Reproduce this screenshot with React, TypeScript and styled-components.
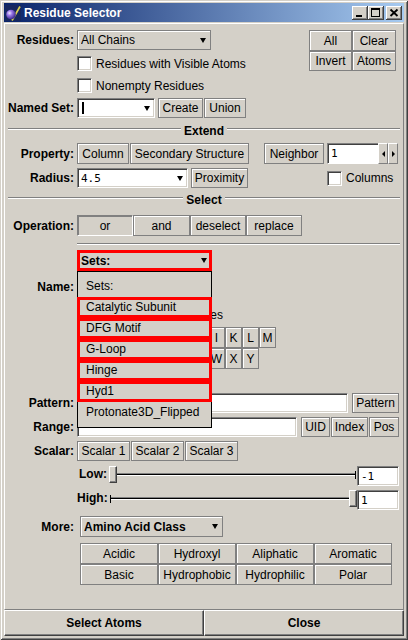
import React from "react";
import styled, { createGlobalStyle, css } from "styled-components";

const FACE = "#D4D0C8";
const SHADOW = "#808080";
const DARK = "#404040";

const GlobalStyle = createGlobalStyle`
  * { box-sizing: border-box; }
  html, body { margin: 0; padding: 0; background: ${FACE}; }
  body {
    font-family: "Liberation Sans", Arial, sans-serif;
    font-size: 12px;
    color: #000;
  }
`;

const Window = styled.div`
  width: 408px;
  height: 640px;
  display: flex;
  flex-direction: column;
  padding: 3px 4px 4px;
  background: ${FACE};
  box-shadow: inset 1px 1px 0 ${FACE}, inset -1px -1px 0 ${DARK},
    inset 2px 2px 0 #fff, inset -2px -2px 0 ${SHADOW};
`;

const TitleBar = styled.div`
  height: 19px;
  flex-shrink: 0;
  margin-bottom: 1px;
  display: flex;
  align-items: center;
  padding: 0 2px 0 1px;
  background: linear-gradient(to right, #0a246a, #a6caf0);
`;

const TitleText = styled.span`
  flex: 1;
  margin-left: 3px;
  color: #fff;
  font-weight: bold;
  font-size: 12px;
  white-space: nowrap;
`;

const CaptionButton = styled.div<{ $gap?: number }>`
  width: 16px;
  height: 14px;
  margin-left: ${(p) => p.$gap ?? 0}px;
  background: ${FACE};
  box-shadow: inset -1px -1px 0 ${DARK}, inset 1px 1px 0 #fff,
    inset -2px -2px 0 ${SHADOW};
  svg {
    display: block;
  }
`;

const Panel = styled.div`
  flex: 1;
  display: flex;
  flex-direction: column;
  padding: 6px 3px 0 0;
  border-top: 1px solid #fff;
  border-left: 1px solid #fff;
  border-bottom: 1px solid ${SHADOW};
  border-right: 1px solid ${SHADOW};
`;

const TopSection = styled.div`
  display: flex;
  align-items: flex-start;
`;

const LeftCol = styled.div`
  flex: 1;
  display: flex;
  flex-direction: column;
`;

const CornerGrid = styled.div`
  display: grid;
  grid-template-columns: 43px 44px;
  grid-template-rows: 21px 20px;
  margin-right: 4px;
`;

const Row = styled.div<{ $h?: number; $mt?: number; $indent?: boolean; $align?: string; $raised?: boolean }>`
  position: relative;
  z-index: ${(p) => (p.$raised ? 5 : "auto")};
  display: flex;
  align-items: ${(p) => p.$align ?? "center"};
  height: ${(p) => p.$h ?? 20}px;
  margin-top: ${(p) => p.$mt ?? 0}px;
  padding-left: ${(p) => (p.$indent ? 72 : 0)}px;
  flex-shrink: 0;
`;

const Label = styled.div`
  width: 69px;
  margin-right: 3px;
  flex-shrink: 0;
  text-align: right;
  font-weight: bold;
  white-space: nowrap;
`;

const Button = styled.button<{ $w?: number; $ml?: number; $mr?: number; $pressed?: boolean }>`
  appearance: none;
  margin: 0 ${(p) => p.$mr ?? 0}px 0 ${(p) => p.$ml ?? 0}px;
  padding: 0;
  font: inherit;
  color: #000;
  width: ${(p) => (p.$w ? `${p.$w}px` : "auto")};
  height: 100%;
  flex-shrink: 0;
  display: flex;
  align-items: center;
  justify-content: center;
  white-space: nowrap;
  background: ${FACE};
  border: 1px solid ${SHADOW};
  box-shadow: inset 1px 1px 0 #fff;
  ${(p) =>
    p.$pressed &&
    css`
      border-color: ${SHADOW} #fff #fff ${SHADOW};
      box-shadow: inset 1px 1px 0 ${SHADOW};
    `}
`;

const BigButton = styled.button`
  appearance: none;
  margin: 0;
  padding: 0;
  flex: 1;
  height: 100%;
  font: inherit;
  font-weight: bold;
  color: #000;
  background: ${FACE};
  border-top: 1px solid #fff;
  border-left: 1px solid #fff;
  border-bottom: 1px solid ${DARK};
  border-right: 1px solid ${DARK};
  box-shadow: inset -1px -1px 0 ${SHADOW};
`;

const BottomBar = styled.div`
  height: 26px;
  flex-shrink: 0;
  display: flex;
`;

const CheckBox = styled.span`
  width: 15px;
  height: 15px;
  flex-shrink: 0;
  background: #fff;
  border-top: 1px solid ${SHADOW};
  border-left: 1px solid ${SHADOW};
  border-bottom: 1px solid #fff;
  border-right: 1px solid #fff;
  box-shadow: inset 1px 1px 0 ${DARK}, inset -1px -1px 0 ${FACE};
`;

const CheckText = styled.span`
  margin-left: 4px;
  white-space: nowrap;
`;

const Field = styled.div<{ $w?: number; $ml?: number; $flex?: boolean }>`
  width: ${(p) => (p.$w ? `${p.$w}px` : "auto")};
  flex: ${(p) => (p.$flex ? 1 : "none")};
  margin-left: ${(p) => p.$ml ?? 0}px;
  height: 100%;
  display: flex;
  align-items: center;
  padding-left: 3px;
  background: #fff;
  font-family: "DejaVu Sans Mono", "Liberation Mono", monospace;
  font-size: 11px;
  border-top: 1px solid ${SHADOW};
  border-left: 1px solid ${SHADOW};
  border-bottom: 1px solid #fff;
  border-right: 1px solid #fff;
  box-shadow: inset 1px 1px 0 ${DARK}, inset -1px -1px 0 ${FACE};
`;

const Combo = styled.div<{ $w: number; $ml?: number; $editable?: boolean; $bold?: boolean; $hl?: boolean }>`
  position: relative;
  width: ${(p) => p.$w}px;
  margin-left: ${(p) => p.$ml ?? 0}px;
  height: 100%;
  flex-shrink: 0;
  display: flex;
  align-items: center;
  padding: 0 4px 0 3px;
  font-weight: ${(p) => (p.$bold ? "bold" : "normal")};
  white-space: nowrap;
  ${(p) =>
    p.$editable
      ? css`
          background: #fff;
          border-top: 1px solid ${SHADOW};
          border-left: 1px solid ${SHADOW};
          border-bottom: 1px solid #fff;
          border-right: 1px solid #fff;
          box-shadow: inset 1px 1px 0 ${DARK}, inset -1px -1px 0 ${FACE};
          font-family: "DejaVu Sans Mono", "Liberation Mono", monospace;
          font-size: 11px;
        `
      : css`
          background: ${FACE};
          border: 1px solid ${SHADOW};
          box-shadow: inset 1px 1px 0 #fff;
        `}
  ${(p) =>
    p.$hl &&
    css`
      outline: 3px solid #f00;
      outline-offset: -3px;
    `}
`;

const ComboText = styled.span`
  flex: 1;
  display: flex;
  align-items: center;
  overflow: hidden;
`;

const Arrow = styled.span`
  width: 0;
  height: 0;
  flex-shrink: 0;
  border-left: 3px solid transparent;
  border-right: 3px solid transparent;
  border-top: 5px solid #000;
`;

const Caret = styled.span`
  width: 2px;
  height: 12px;
  background: #000;
  margin-left: 1px;
`;

const TitledSep = styled.div<{ $mt: number }>`
  display: flex;
  align-items: flex-start;
  height: 14px;
  margin: ${(p) => p.$mt}px 0 0 3px;
  flex-shrink: 0;
`;

const SepLine = styled.div`
  flex: 1;
  height: 2px;
  margin-top: 4px;
  border-top: 1px solid ${SHADOW};
  border-bottom: 1px solid #fff;
`;

const SepTitle = styled.div`
  padding: 0 3px;
  line-height: 14px;
  font-weight: bold;
`;

const ContentRule = styled.div<{ $mt: number }>`
  height: 2px;
  margin: ${(p) => p.$mt}px 0 0 72px;
  border-top: 1px solid ${SHADOW};
  border-bottom: 1px solid #fff;
  flex-shrink: 0;
`;

const Spinner = styled.div`
  display: flex;
  height: 100%;
  margin-left: 3px;
`;

const SpinField = styled(Field)`
  box-shadow: inset 1px 1px 0 ${DARK};
  border-right: none;
`;

const SpinButton = styled.div`
  width: 10px;
  height: 100%;
  display: flex;
  align-items: center;
  justify-content: center;
  background: ${FACE};
  border-top: 1px solid #fff;
  border-left: 1px solid #fff;
  border-bottom: 1px solid ${SHADOW};
  border-right: 1px solid ${SHADOW};
`;

const TinyArrow = styled.span<{ $dir: "left" | "right" }>`
  width: 0;
  height: 0;
  border-top: 3px solid transparent;
  border-bottom: 3px solid transparent;
  ${(p) =>
    p.$dir === "left"
      ? css`
          border-right: 3px solid #000;
        `
      : css`
          border-left: 3px solid #000;
        `}
`;

const CheckGroup = styled.div<{ $ml: number }>`
  display: flex;
  align-items: center;
  margin-left: ${(p) => p.$ml}px;
`;

const SetsWrap = styled.div`
  position: relative;
  height: 100%;
  display: flex;
`;

const Popup = styled.div`
  position: absolute;
  top: 100%;
  left: 0;
  width: 135px;
  z-index: 10;
  padding: 4px 0;
  background: ${FACE};
  border: 1px solid #000;
`;

const PopupItem = styled.div<{ $hl?: boolean }>`
  position: relative;
  height: 21px;
  line-height: 21px;
  padding-left: 8px;
  white-space: nowrap;
  ${(p) =>
    p.$hl &&
    css`
      &::after {
        content: "";
        position: absolute;
        top: 0;
        bottom: 0;
        left: -1px;
        right: -1px;
        border: 3px solid #f00;
      }
    `}
`;

const LetterStrip = styled.div<{ $ml: number }>`
  display: flex;
  height: 100%;
  margin-left: ${(p) => p.$ml}px;
`;

const SliderLabel = styled.div`
  width: 30px;
  flex-shrink: 0;
  text-align: right;
  font-weight: bold;
  line-height: 17px;
`;

const Slider = styled.div<{ $pl: number; $pr: number }>`
  width: 250px;
  height: 17px;
  flex-shrink: 0;
  display: flex;
  align-items: center;
  padding: 0 ${(p) => p.$pr}px 0 ${(p) => p.$pl}px;
`;

const Thumb = styled.div`
  width: 8px;
  height: 17px;
  flex-shrink: 0;
  background: ${FACE};
  border-top: 1px solid #fff;
  border-left: 1px solid #fff;
  border-bottom: 1px solid ${DARK};
  border-right: 1px solid ${DARK};
  box-shadow: inset -1px -1px 0 ${SHADOW};
`;

const Track = styled.div`
  flex: 1;
  height: 3px;
  background: #000;
  border-top: 1px solid ${SHADOW};
  border-bottom: 1px solid #fff;
`;

const Tick = styled.div`
  width: 1px;
  height: 8px;
  flex-shrink: 0;
  background: #000;
`;

const ClassGrid = styled.div`
  display: grid;
  grid-template-columns: repeat(4, 78px);
  grid-template-rows: 21px 21px;
  margin: 6px 0 0 75px;
  flex-shrink: 0;
`;

const AppIcon = () => (
  <svg width="16" height="16" viewBox="0 0 16 16" style={{ flexShrink: 0 }}>
    <defs>
      <radialGradient id="ball" cx="0.35" cy="0.35" r="0.75">
        <stop offset="0" stopColor="#f0e8ff" />
        <stop offset="0.35" stopColor="#9a78e8" />
        <stop offset="1" stopColor="#2a1a78" />
      </radialGradient>
    </defs>
    <rect width="16" height="16" fill="#17275e" />
    <line x1="7" y1="15.5" x2="15" y2="1.5" stroke="#d8d050" strokeWidth="1.7" />
    <circle cx="6" cy="9.5" r="4.8" fill="url(#ball)" />
  </svg>
);

/* Only the letter buttons that show beside the open popup list */
const letters1 = ["I", "K", "L", "M"];
const letters2 = ["W", "X", "Y"];
const sets = [
  { t: "Sets:", hl: false },
  { t: "Catalytic Subunit", hl: true },
  { t: "DFG Motif", hl: true },
  { t: "G-Loop", hl: true },
  { t: "Hinge", hl: true },
  { t: "Hyd1", hl: true },
  { t: "Protonate3D_Flipped", hl: false },
];
const classes = ["Acidic", "Hydroxyl", "Aliphatic", "Aromatic", "Basic", "Hydrophobic", "Hydrophilic", "Polar"];

export default function App() {
  return (
    <>
      <GlobalStyle />
      <Window>
        <TitleBar>
          <AppIcon />
          <TitleText>Residue Selector</TitleText>
          <CaptionButton>
            <svg width="16" height="14" viewBox="0 0 16 14">
              <rect x="4" y="9" width="6" height="2" fill="#000" />
            </svg>
          </CaptionButton>
          <CaptionButton>
            <svg width="16" height="14" viewBox="0 0 16 14">
              <path d="M3 2h9v9H3z M4 4v6h7V4z" fill="#000" fillRule="evenodd" />
            </svg>
          </CaptionButton>
          <CaptionButton $gap={2}>
            <svg width="16" height="14" viewBox="0 0 16 14">
              <path d="M4.5 3.5l7 6.5M11.5 3.5l-7 6.5" stroke="#000" strokeWidth="1.8" />
            </svg>
          </CaptionButton>
        </TitleBar>

        <Panel>
          <TopSection>
            <LeftCol>
              <Row $h={20}>
                <Label>Residues:</Label>
                <Combo $w={134}>
                  <ComboText>All Chains</ComboText>
                  <Arrow />
                </Combo>
              </Row>
              <Row $h={15} $mt={6} $indent>
                <CheckBox />
                <CheckText>Residues with Visible Atoms</CheckText>
              </Row>
              <Row $h={15} $mt={7} $indent>
                <CheckBox />
                <CheckText>Nonempty Residues</CheckText>
              </Row>
              <Row $h={20} $mt={5}>
                <Label>Named Set:</Label>
                <Combo $w={78} $editable>
                  <ComboText>
                    <Caret />
                  </ComboText>
                  <Arrow />
                </Combo>
                <Button $w={45} $ml={3}>Create</Button>
                <Button $w={42} $ml={1}>Union</Button>
              </Row>
            </LeftCol>
            <CornerGrid>
              <Button>All</Button>
              <Button>Clear</Button>
              <Button>Invert</Button>
              <Button>Atoms</Button>
            </CornerGrid>
          </TopSection>

          <TitledSep $mt={6}>
            <SepLine />
            <SepTitle>Extend</SepTitle>
            <SepLine />
          </TitledSep>

          <Row $h={21} $mt={5}>
            <Label>Property:</Label>
            <Button $w={52}>Column</Button>
            <Button $w={119} $ml={1}>Secondary Structure</Button>
            <Button $w={60} $ml={15}>Neighbor</Button>
            <Spinner>
              <SpinField $w={51}>1</SpinField>
              <SpinButton>
                <TinyArrow $dir="left" />
              </SpinButton>
              <SpinButton>
                <TinyArrow $dir="right" />
              </SpinButton>
            </Spinner>
          </Row>

          <Row $h={20} $mt={4}>
            <Label>Radius:</Label>
            <Combo $w={111} $editable>
              <ComboText>4.5</ComboText>
              <Arrow />
            </Combo>
            <Button $w={57} $ml={3}>Proximity</Button>
            <CheckGroup $ml={79}>
              <CheckBox />
              <CheckText>Columns</CheckText>
            </CheckGroup>
          </Row>

          <TitledSep $mt={5}>
            <SepLine />
            <SepTitle>Select</SepTitle>
            <SepLine />
          </TitledSep>

          <Row $h={21} $mt={8}>
            <Label>Operation:</Label>
            <Button $w={56} $pressed>or</Button>
            <Button $w={57}>and</Button>
            <Button $w={56}>deselect</Button>
            <Button $w={56}>replace</Button>
          </Row>

          <ContentRule $mt={7} />

          <Row $h={21} $mt={5} $indent $raised>
            <SetsWrap>
              <Combo $w={135} $bold $hl>
                <ComboText>Sets:</ComboText>
                <Arrow />
              </Combo>
              <Popup>
                {sets.map((s) => (
                  <PopupItem key={s.t} $hl={s.hl}>
                    {s.t}
                  </PopupItem>
                ))}
              </Popup>
            </SetsWrap>
          </Row>

          <Row $h={20} $mt={6}>
            <Label>Name:</Label>
            <Field $w={128} />
          </Row>

          <Row $h={20} $mt={8} $indent>
            <CheckBox />
            <CheckText>Include Water Residues</CheckText>
          </Row>

          <Row $h={21} $mt={2} $indent>
            <LetterStrip $ml={131}>
              {letters1.map((l) => (
                <Button key={l} $w={17}>{l}</Button>
              ))}
            </LetterStrip>
          </Row>
          <Row $h={21} $indent>
            <LetterStrip $ml={131}>
              {letters2.map((l) => (
                <Button key={l} $w={17}>{l}</Button>
              ))}
            </LetterStrip>
          </Row>

          <Row $h={20} $mt={24}>
            <Label>Pattern:</Label>
            <Field $flex />
            <Button $w={47} $ml={4} $mr={1}>Pattern</Button>
          </Row>

          <Row $h={20} $mt={4}>
            <Label>Range:</Label>
            <Field $w={220} />
            <Button $w={29} $ml={4}>UID</Button>
            <Button $w={37} $ml={1}>Index</Button>
            <Button $w={30} $ml={1}>Pos</Button>
          </Row>

          <Row $h={20} $mt={4}>
            <Label>Scalar:</Label>
            <Button $w={53}>Scalar 1</Button>
            <Button $w={53} $ml={1}>Scalar 2</Button>
            <Button $w={53} $ml={1}>Scalar 3</Button>
          </Row>

          <Row $h={20} $mt={5} $indent $align="flex-start">
            <SliderLabel>Low:</SliderLabel>
            <Slider $pl={2} $pr={1}>
              <Thumb />
              <Track />
              <Tick />
            </Slider>
            <Field $w={42}>-1</Field>
          </Row>

          <Row $h={20} $mt={4} $indent $align="flex-start">
            <SliderLabel>High:</SliderLabel>
            <Slider $pl={3} $pr={0}>
              <Tick />
              <Track />
              <Thumb />
            </Slider>
            <Field $w={42}>1</Field>
          </Row>

          <Row $h={21} $mt={6}>
            <Label>More:</Label>
            <Combo $w={143} $ml={3} $bold>
              <ComboText>Amino Acid Class</ComboText>
              <Arrow />
            </Combo>
          </Row>

          <ClassGrid>
            {classes.map((c) => (
              <Button key={c}>{c}</Button>
            ))}
          </ClassGrid>
        </Panel>

        <BottomBar>
          <BigButton>Select Atoms</BigButton>
          <BigButton>Close</BigButton>
        </BottomBar>
      </Window>
    </>
  );
}
